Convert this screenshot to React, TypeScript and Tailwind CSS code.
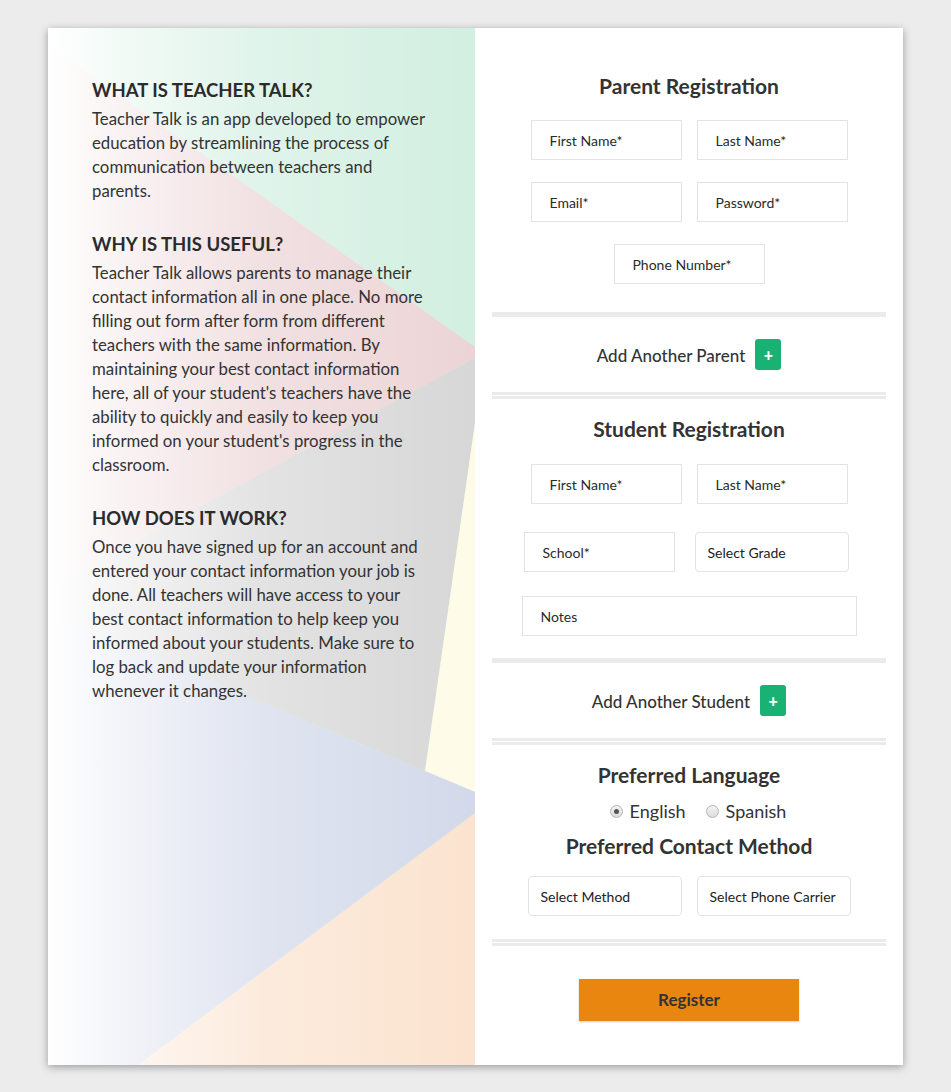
import { useState } from 'react';

const font = "font-['Lato','Open_Sans',sans-serif]";

function Backdrop() {
  return (
    <svg
      className="absolute inset-0 h-full w-full"
      viewBox="0 0 427 1037"
      preserveAspectRatio="none"
      aria-hidden
    >
      <defs>
        <linearGradient id="fade" x1="0" y1="0" x2="1" y2="0">
          <stop offset="0" stopColor="#fff" stopOpacity="1" />
          <stop offset="0.15" stopColor="#fff" stopOpacity="0.75" />
          <stop offset="0.5" stopColor="#fff" stopOpacity="0.3" />
          <stop offset="1" stopColor="#fff" stopOpacity="0" />
        </linearGradient>
      </defs>
      <rect width="427" height="1037" fill="#d2efe1" />
      <polygon points="0,17 427,319 427,330 0,561" fill="#ecd4d6" />
      <polygon points="0,561 427,330 427,395 377,743 0,585" fill="#d7d7d7" />
      <polygon points="427,395 427,764 377,743" fill="#fefbe8" />
      <polygon points="0,585 427,764 427,785 90,1037 0,1037" fill="#d3d9ea" />
      <polygon points="427,785 427,1037 90,1037" fill="#fbe3cf" />
      <rect width="427" height="1037" fill="url(#fade)" />
    </svg>
  );
}

function Field({ placeholder, width = 'w-[151px]' }: { placeholder: string; width?: string }) {
  return (
    <input
      placeholder={placeholder}
      className={`${width} h-[40px] border border-[#e3e3e3] bg-white pl-[18px] text-[14px] text-[#333] outline-none placeholder:text-[#2a2a2a]`}
    />
  );
}

function Select({ label, width = 'w-[154px]' }: { label: string; width?: string }) {
  return (
    <select
      defaultValue=""
      className={`${width} h-[40px] appearance-none rounded-[4px] border border-[#e3e3e3] bg-white pl-[12px] text-[14px] text-[#222] outline-none`}
    >
      <option value="">{label}</option>
    </select>
  );
}

function SolidRule() {
  return <div className="h-[5px] bg-[#ebebeb]" />;
}

function DoubleRule() {
  return <div className="h-[7px] border-y-[3px] border-[#ebebeb] bg-white" />;
}

function AddRow({ label }: { label: string }) {
  return (
    <div className="flex items-center justify-center gap-[10px] py-[22px]">
      <span className="pt-[3px] text-[17px] font-medium text-[#333]">{label}</span>
      <button className="flex h-[31px] w-[26px] items-center justify-center rounded-[3px] bg-[#19b274] text-[16px] font-black leading-none text-white">
        +
      </button>
    </div>
  );
}

function Heading({ children }: { children: string }) {
  return <h2 className="text-center text-[21px] font-bold leading-[28px] text-[#333]">{children}</h2>;
}

function Radio({ checked, label, onClick }: { checked: boolean; label: string; onClick: () => void }) {
  return (
    <label className="flex cursor-pointer items-center gap-[7px]" onClick={onClick}>
      <span className="flex h-[13px] w-[13px] items-center justify-center rounded-full border border-[#b5b5b5] bg-gradient-to-b from-[#f4f4f4] to-[#dcdcdc]">
        {checked && <span className="h-[5px] w-[5px] rounded-full bg-[#555]" />}
      </span>
      <span className="text-[18px] leading-[20px] text-[#333]">{label}</span>
    </label>
  );
}

const about = [
  {
    title: 'What is Teacher Talk?',
    body: 'Teacher Talk is an app developed to empower education by streamlining the process of communication between teachers and parents.',
  },
  {
    title: 'Why is this useful?',
    body: "Teacher Talk allows parents to manage their contact information all in one place. No more filling out form after form from different teachers with the same information. By maintaining your best contact information here, all of your student's teachers have the ability to quickly and easily to keep you informed on your student's progress in the classroom.",
  },
  {
    title: 'How does it work?',
    body: 'Once you have signed up for an account and entered your contact information your job is done. All teachers will have access to your best contact information to help keep you informed about your students. Make sure to log back and update your information whenever it changes.',
  },
];

export default function App() {
  const [lang, setLang] = useState('english');

  return (
    <div className={`min-h-screen bg-[#ececec] pt-[28px] pb-[27px] ${font}`}>
      <div className="mx-auto flex w-[855px] shadow-[0_2px_8px_rgba(0,0,0,0.35)]">
        <aside className="relative w-[427px] shrink-0 overflow-hidden">
          <Backdrop />
          <div className="relative flex flex-col gap-[29px] pt-[50px] pl-[44px] pr-[45px] text-[#333]">
            {about.map((s) => (
              <section key={s.title}>
                <h3 className="mb-[5px] text-[18.5px] font-bold uppercase leading-[24px] text-[#2b2b2b]">
                  {s.title}
                </h3>
                <p className="text-[16.8px] leading-[24px]">{s.body}</p>
              </section>
            ))}
          </div>
        </aside>

        <main className="w-[428px] bg-white px-[17px] pt-[44px] pb-[44px]">
          <Heading>Parent Registration</Heading>
          <div className="mt-[20px] flex flex-col items-center gap-[22px]">
            <div className="flex gap-[15px]">
              <Field placeholder="First Name*" />
              <Field placeholder="Last Name*" />
            </div>
            <div className="flex gap-[15px]">
              <Field placeholder="Email*" />
              <Field placeholder="Password*" />
            </div>
            <Field placeholder="Phone Number*" />
          </div>
          <div className="mt-[28px]">
            <SolidRule />
          </div>
          <AddRow label="Add Another Parent" />
          <DoubleRule />

          <div className="mt-[16px]">
            <Heading>Student Registration</Heading>
          </div>
          <div className="mt-[21px] flex flex-col items-center">
            <div className="flex gap-[15px]">
              <Field placeholder="First Name*" />
              <Field placeholder="Last Name*" />
            </div>
            <div className="mt-[28px] flex gap-[20px] pr-[6px]">
              <Field placeholder="School*" />
              <Select label="Select Grade" />
            </div>
            <div className="mt-[24px]">
              <Field placeholder="Notes" width="w-[335px]" />
            </div>
          </div>
          <div className="mt-[22px]">
            <SolidRule />
          </div>
          <AddRow label="Add Another Student" />
          <DoubleRule />

          <div className="mt-[16px]">
            <Heading>Preferred Language</Heading>
          </div>
          <div className="mt-[12px] flex items-center justify-center gap-[20px] pl-[18px]">
            <Radio checked={lang === 'english'} label="English" onClick={() => setLang('english')} />
            <Radio checked={lang === 'spanish'} label="Spanish" onClick={() => setLang('spanish')} />
          </div>
          <div className="mt-[11px]">
            <Heading>Preferred Contact Method</Heading>
          </div>
          <div className="mt-[16px] flex justify-center gap-[15px]">
            <Select label="Select Method" />
            <Select label="Select Phone Carrier" />
          </div>
          <div className="mt-[23px]">
            <DoubleRule />
          </div>
          <div className="mt-[33px] flex justify-center">
            <button className="h-[42px] w-[220px] bg-[#e8860f] text-[17px] font-bold text-[#333] shadow-[0_1px_2px_rgba(0,0,0,0.2)]">
              Register
            </button>
          </div>
        </main>
      </div>
    </div>
  );
}
